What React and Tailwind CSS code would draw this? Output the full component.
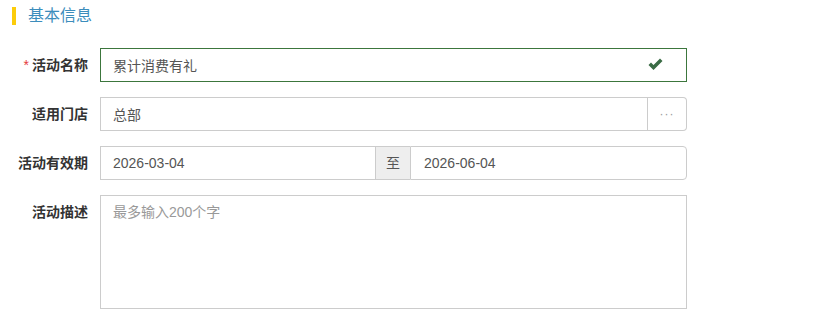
import React from 'react';

const font = { fontFamily: '"Liberation Sans", "Noto Sans CJK SC", sans-serif' };

const Label = ({ required, children }) => (
  <label className="w-[88px] shrink-0 text-right text-[14px] font-bold text-[#333] leading-[34px]">
    {required && <span className="text-[#e4393c] mr-[3px] font-normal">*</span>}
    {children}
  </label>
);

const App = () => {
  return (
    <div className="w-[829px] h-[334px] bg-white" style={font}>
      <div className="flex items-center h-[18px] mt-[7px] ml-[12px]">
        <span className="w-[4px] h-[18px] bg-[#fccc0a]" />
        <h2 className="ml-[12px] text-[16px] text-[#3c8dbc] leading-[18px]">基本信息</h2>
      </div>

      <div className="mt-[23px] flex flex-col gap-[15px]">
        <div className="flex gap-[12px]">
          <Label required>活动名称</Label>
          <div className="relative w-[587px] h-[34px]">
            <input
              className="w-full h-full border border-[#3c763d] px-[12px] text-[14px] text-[#555] outline-none"
              defaultValue="累计消费有礼"
            />
            <svg className="absolute right-[24px] top-[10px]" width="15" height="13" viewBox="0 0 15 13">
              <path d="M0.5 7 L3 4.5 L5.5 7 L12 0.5 L14.5 3 L5.5 12 Z" fill="#3a6b45" />
            </svg>
          </div>
        </div>

        <div className="flex gap-[12px]">
          <Label>适用门店</Label>
          <div className="flex w-[587px] h-[34px]">
            <input
              className="flex-1 min-w-0 h-full border border-[#ccc] px-[12px] text-[14px] text-[#555] outline-none"
              defaultValue="总部"
            />
            <span className="w-[39px] h-full border border-l-0 border-[#ccc] rounded-r-[4px] flex items-center justify-center text-[12px] text-[#999] tracking-[1px]">
              ···
            </span>
          </div>
        </div>

        <div className="flex gap-[12px]">
          <Label>活动有效期</Label>
          <div className="flex w-[587px] h-[34px]">
            <input
              className="w-[276px] h-full border border-[#ccc] px-[12px] text-[14px] text-[#555] outline-none"
              defaultValue="2026-03-04"
            />
            <span className="w-[34px] h-full border-y border-[#ccc] bg-[#eee] flex items-center justify-center text-[14px] text-[#555]">
              至
            </span>
            <input
              className="flex-1 min-w-0 h-full border border-[#ccc] rounded-r-[4px] px-[13px] text-[14px] text-[#555] outline-none"
              defaultValue="2026-06-04"
            />
          </div>
        </div>

        <div className="flex gap-[12px]">
          <Label>活动描述</Label>
          <textarea
            className="w-[587px] h-[114px] border border-[#ccc] px-[12px] py-[6px] text-[14px] text-[#555] placeholder:text-[#999] outline-none resize-none"
            placeholder="最多输入200个字"
          />
        </div>
      </div>
    </div>
  );
};

export default App;
